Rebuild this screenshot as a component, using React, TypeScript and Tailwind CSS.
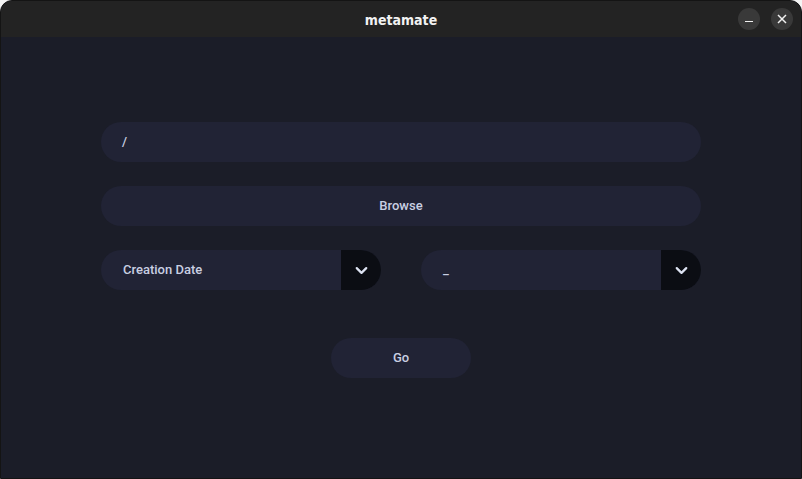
import { ChevronDown } from 'lucide-react';

function Select({ label }: { label: string }) {
  return (
    <div className="flex h-10 w-[280px] overflow-hidden rounded-full bg-[#212335]">
      <div className="flex flex-1 items-center pl-[22px] text-[13px] font-medium text-[#c9cfe2]">{label}</div>
      <div className="flex w-10 items-center justify-center bg-[#0b0d13] pt-[1px]">
        <ChevronDown size={19} strokeWidth={2.8} className="text-[#dde3f2]" />
      </div>
    </div>
  );
}

export default function App() {
  return (
    <div className="h-[479px] w-[802px] bg-[#f4f4f4] font-['Roboto',sans-serif]">
      <div className="flex h-full flex-col overflow-hidden rounded-t-[12px] border border-[#141414] bg-[#1b1d28]">
        <div className="relative flex h-[36px] shrink-0 items-center justify-center bg-[#232323] pt-[2px]">
          <span className="font-['DejaVu_Sans_Condensed','DejaVu_Sans',sans-serif] text-[14px] font-bold text-[#f2f2f2] [font-stretch:condensed]">metamate</span>
          <div className="absolute right-[8px] top-[7px] flex gap-[11px]">
            <div className="flex h-[22px] w-[22px] items-center justify-center rounded-full bg-[#393939]">
              <div className="mt-[5px] h-[1.5px] w-[8px] bg-[#f0f0f0]" />
            </div>
            <div className="flex h-[22px] w-[22px] items-center justify-center rounded-full bg-[#393939] text-[#f0f0f0]">
              <svg width="10" height="10" viewBox="0 0 10 10" fill="none" stroke="currentColor" strokeWidth="1.5">
                <path d="M1 1L9 9M9 1L1 9" />
              </svg>
            </div>
          </div>
        </div>
        <div className="flex flex-col items-center pt-[85px]">
          <div className="flex h-10 w-[600px] items-center rounded-full bg-[#212335] pl-[21px] text-[13px] font-medium text-[#c9cfe2]">/</div>
          <div className="mt-6 flex h-10 w-[600px] items-center justify-center rounded-full bg-[#212335] text-[13px] font-medium text-[#c9cfe2]">Browse</div>
          <div className="mt-6 flex w-[600px] justify-between">
            <Select label="Creation Date" />
            <Select label="_" />
          </div>
          <div className="mt-12 flex h-10 w-[140px] items-center justify-center rounded-full bg-[#212335] text-[13px] font-medium text-[#c9cfe2]">Go</div>
        </div>
      </div>
    </div>
  );
}
